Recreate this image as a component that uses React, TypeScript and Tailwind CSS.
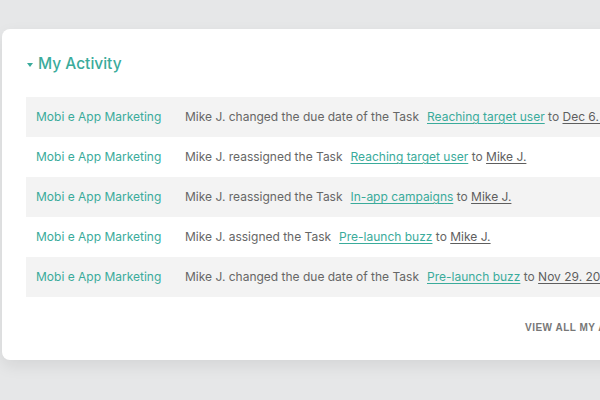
import { ReactNode } from "react"

type Row = { project: string; action: string; task: string; target: string }

const ROWS: Row[] = [
  { project: "Mobi e App Marketing", action: "Mike J. changed the due date of the Task", task: "Reaching target user", target: "Dec 6. 2017" },
  { project: "Mobi e App Marketing", action: "Mike J. reassigned the Task", task: "Reaching target user", target: "Mike J." },
  { project: "Mobi e App Marketing", action: "Mike J. reassigned the Task", task: "In-app campaigns", target: "Mike J." },
  { project: "Mobi e App Marketing", action: "Mike J. assigned the Task", task: "Pre-launch buzz", target: "Mike J." },
  { project: "Mobi e App Marketing", action: "Mike J. changed the due date of the Task", task: "Pre-launch buzz", target: "Nov 29. 2017" },
]

function Link({ children, teal }: { children: ReactNode; teal?: boolean }) {
  return (
    <a
      href="#"
      className={
        teal
          ? "text-[#3aab9b] underline underline-offset-2 decoration-1"
          : "text-[#5e5e5e] underline underline-offset-2 decoration-1"
      }
    >
      {children}
    </a>
  )
}

export default function App() {
  return (
    <div
      className="h-[400px] w-[600px] overflow-hidden bg-[#e6e7e8] pl-[2px] pt-[29px]"
      style={{ fontFamily: "Inter, 'Noto Sans', sans-serif" }}
    >
      <div className="w-[720px] rounded-lg bg-white pl-6 pr-6 pt-[23px] pb-[27px] shadow-[0_6px_16px_rgba(0,0,0,0.08)]">
        {/* Header */}
        <div className="flex h-6 items-center gap-[5px] pl-[1px]">
          <svg width="6" height="6" viewBox="0 0 6 6" className="mt-[2px]">
            <path d="M0 1 L6 1 L3 5 Z" fill="#3aab9b" />
          </svg>
          <h2 className="text-[15.5px] font-medium text-[#3aab9b]">My Activity</h2>
        </div>

        {/* Activity rows */}
        <div className="mt-[21px]">
          {ROWS.map((r, i) => (
            <div
              key={i}
              className={
                "flex h-10 items-center whitespace-nowrap text-[12px] " +
                (i % 2 === 0 ? "bg-[#f3f3f3]" : "bg-white")
              }
            >
              <div className="w-[159px] shrink-0 pl-[10px] text-[#3aab9b]">{r.project}</div>
              <div className="text-[#666]">
                {r.action}
                <span className="ml-[8px]">
                  <Link teal>{r.task}</Link>
                </span>{" "}
                to <Link>{r.target}</Link>
              </div>
            </div>
          ))}
        </div>

        {/* Footer */}
        <div className="mt-6 flex h-3 items-center pl-[499px]">
          <span
            className="text-[10px] font-bold uppercase tracking-[0.05em] text-[#777]"
            style={{ fontFamily: "'Liberation Sans', Arial, sans-serif" }}
          >
            View all my activity
          </span>
        </div>
      </div>
    </div>
  )
}
